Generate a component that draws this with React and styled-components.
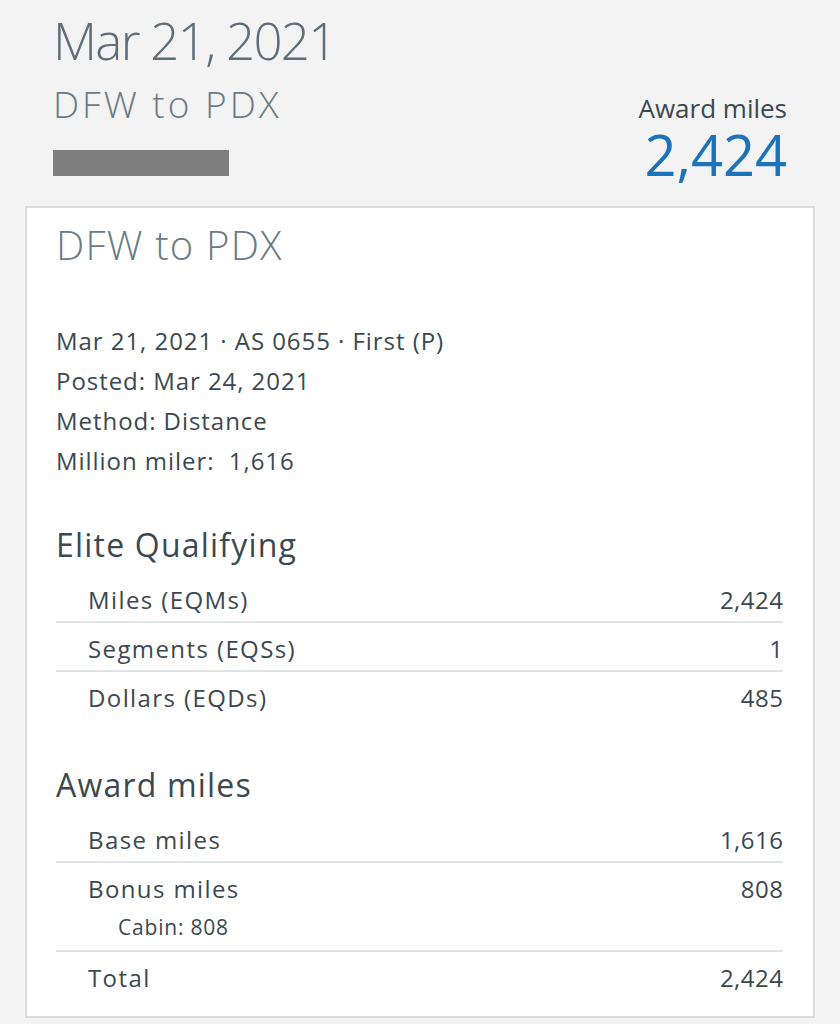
import React from "react";
import styled, { createGlobalStyle } from "styled-components";

const Global = createGlobalStyle`
  html, body { margin: 0; padding: 0; background: #f3f3f4; }
  body { font-family: "Open Sans", "Noto Sans", sans-serif; color: #3b4850; }
`;

const Page = styled.div`
  width: 840px;
  min-height: 1024px;
  background: #f3f3f4;
  padding-top: 9px;
  box-sizing: border-box;
`;

const Header = styled.header`
  display: flex;
  justify-content: space-between;
  align-items: flex-end;
  padding: 0 53px;
`;

const LeftCol = styled.div`
  display: flex;
  flex-direction: column;
`;

const DateTitle = styled.h1`
  margin: 0;
  font-size: 51px;
  line-height: 62px;
  font-weight: 300;
  color: #5d6e78;
  letter-spacing: -1.7px;
`;

const Route = styled.div`
  margin-top: 11px;
  font-size: 37px;
  line-height: 43px;
  font-weight: 300;
  color: #6a7b85;
  letter-spacing: 3px;
`;

const Redacted = styled.div`
  margin-top: 25px;
  width: 176px;
  height: 26px;
  background: #7f7f7f;
`;

const RightCol = styled.div`
  display: flex;
  flex-direction: column;
  align-items: flex-end;
  margin-bottom: -3px;
`;

const AwardLabel = styled.div`
  font-size: 26px;
  line-height: 34px;
  font-weight: 400;
  color: #3b4850;
`;

const AwardValue = styled.div`
  font-size: 56px;
  line-height: 50px;
  font-weight: 400;
  color: #1b74bb;
  margin-top: 4px;
`;

const Card = styled.section`
  margin: 30px 25px 0;
  background: #ffffff;
  border: 2px solid #dadde0;
  padding: 13px 30px 15px 29px;
`;

const CardTitle = styled.h2`
  margin: 0;
  font-size: 40px;
  line-height: 48px;
  font-weight: 300;
  color: #6a7b85;
  letter-spacing: 1.2px;
`;

const Details = styled.div`
  margin-top: 52px;
  display: flex;
  flex-direction: column;
`;

const DetailLine = styled.div`
  font-size: 24px;
  line-height: 40px;
  color: #3b4850;
  letter-spacing: 0.95px;
`;

const SectionHeading = styled.h3`
  margin: 44px 0 9px;
  font-size: 32px;
  line-height: 40px;
  font-weight: 400;
  color: #3b4850;
  letter-spacing: 1.2px;
`;

const Row = styled.div`
  display: flex;
  flex-direction: column;
  padding: 9px 0 ${(p) => (p.$sub ? "7px" : "5px")} 32px;
  border-bottom: ${(p) => (p.$last ? "2px solid transparent" : "2px solid #e0e3e6")};
`;

const RowMain = styled.div`
  display: flex;
  justify-content: space-between;
  font-size: 24px;
  line-height: 33px;
  color: #3b4850;
`;

const Label = styled.span`
  letter-spacing: 1.4px;
`;

const Value = styled.span`
  letter-spacing: 0.5px;
  margin-right: -0.5px;
`;

const SubLine = styled.div`
  margin: 6px 0 0 30px;
  font-size: 21px;
  line-height: 32px;
  color: #3b4850;
  letter-spacing: 0.8px;
`;

const eliteRows = [
  { label: "Miles (EQMs)", value: "2,424" },
  { label: "Segments (EQSs)", value: "1" },
  { label: "Dollars (EQDs)", value: "485" },
];

const awardRows = [
  { label: "Base miles", value: "1,616" },
  { label: "Bonus miles", value: "808", sub: "Cabin: 808" },
  { label: "Total", value: "2,424" },
];

function Rows({ rows }) {
  return rows.map((r, i) => (
    <Row key={r.label} $last={i === rows.length - 1} $sub={!!r.sub}>
      <RowMain>
        <Label>{r.label}</Label>
        <Value>{r.value}</Value>
      </RowMain>
      {r.sub && <SubLine>{r.sub}</SubLine>}
    </Row>
  ));
}

export default function App() {
  return (
    <Page>
      <Global />
      <Header>
        <LeftCol>
          <DateTitle>Mar 21, 2021</DateTitle>
          <Route>DFW to PDX</Route>
          <Redacted />
        </LeftCol>
        <RightCol>
          <AwardLabel>Award miles</AwardLabel>
          <AwardValue>2,424</AwardValue>
        </RightCol>
      </Header>
      <Card>
        <CardTitle>DFW to PDX</CardTitle>
        <Details>
          <DetailLine>Mar 21, 2021 · AS 0655 · First (P)</DetailLine>
          <DetailLine>Posted: Mar 24, 2021</DetailLine>
          <DetailLine>Method: Distance</DetailLine>
          <DetailLine>Million miler:&nbsp; 1,616</DetailLine>
        </Details>
        <SectionHeading>Elite Qualifying</SectionHeading>
        <Rows rows={eliteRows} />
        <SectionHeading>Award miles</SectionHeading>
        <Rows rows={awardRows} />
      </Card>
    </Page>
  );
}
